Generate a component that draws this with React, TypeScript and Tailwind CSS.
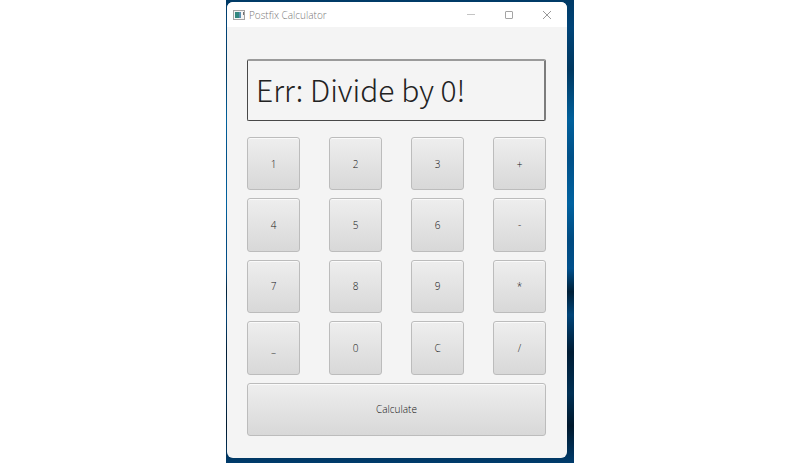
import { useState } from "react";

const keys = ["1", "2", "3", "+", "4", "5", "6", "-", "7", "8", "9", "*", "_", "0", "C", "/"];

const keyStyle =
  "flex items-center justify-center rounded-[3px] border border-[#bcbcbc] bg-linear-to-b from-[#eeeeee] to-[#d8d8d8] text-[10px] leading-4 font-light text-[#111111] shadow-[inset_0_1px_0_#fafafa]";

function TitleBar() {
  return (
    <header className="flex h-[25px] shrink-0 items-center bg-white pl-[6px] pr-[14px]">
      <svg className="h-[10px] w-3 shrink-0" viewBox="0 0 12 10" aria-hidden="true">
        <rect x="0.5" y="0.5" width="11" height="9" fill="#f4f4f4" stroke="#a4a4a4" />
        <rect x="2" y="2" width="4" height="6" fill="#33877f" />
        <rect x="6" y="2" width="2" height="6" fill="#5a8fb0" />
        <rect x="10" y="2" width="1" height="3" fill="#707070" />
      </svg>
      <h1 className="ml-1 flex-1 text-[10px] leading-4 font-light text-[#777777]">Postfix Calculator</h1>
      <div className="flex gap-[26px]">
        <button type="button" aria-label="Minimize" className="h-3 w-3">
          <svg viewBox="0 0 12 12" className="h-3 w-3" fill="none" stroke="#c4c4c4">
            <path d="M2 5.5H10" />
          </svg>
        </button>
        <button type="button" aria-label="Maximize" className="h-3 w-3">
          <svg viewBox="0 0 12 12" className="h-3 w-3" fill="none" stroke="#a4a4a4">
            <rect x="2.5" y="2.5" width="7" height="7" rx="0.5" />
          </svg>
        </button>
        <button type="button" aria-label="Close" className="h-3 w-3">
          <svg viewBox="0 0 12 12" className="h-3 w-3" fill="none" stroke="#999999">
            <path d="M2 2L10 10M10 2L2 10" />
          </svg>
        </button>
      </div>
    </header>
  );
}

export default function App() {
  const [display, setDisplay] = useState("Err: Divide by 0!");

  return (
    <div className="flex h-screen justify-center bg-white font-['Open_Sans','Noto_Sans',sans-serif]">
      <div className="flex w-[348px] bg-[linear-gradient(180deg,#003a66_0%,#004478_6%,#003860_15%,#00609c_26%,#005088_34%,#0062a0_44%,#004a80_52%,#00508c_58%,#002038_63%,#004478_68%,#001c34_76%,#003054_85%,#00182c_92%,#003c6c_100%)] pt-[2px] pr-[7px] pb-[5px] pl-px">
        <main className="flex flex-1 flex-col overflow-hidden rounded-[6px] bg-[#f4f4f4]">
          <TitleBar />
          <div className="flex flex-1 flex-col gap-4 pt-8 pr-[21px] pb-[22px] pl-5">
            <input
              type="text"
              aria-label="Result"
              value={display}
              onChange={(event) => setDisplay(event.target.value)}
              className="h-[62px] w-full shrink-0 rounded-[2px] border border-t-2 border-r-2 border-[#484848] border-t-[#9a9a9a] border-r-[#7c7c7c] bg-[#f4f4f4] px-2 pb-1 font-['Noto_Sans_CJK_JP',sans-serif] text-[30px] font-light text-[#222222] outline-none"
            />
            <div className="grid flex-1 grid-cols-[repeat(4,53px)] grid-rows-5 justify-between gap-y-2">
              {keys.map((key) => (
                <button key={key} type="button" className={keyStyle}>
                  {key}
                </button>
              ))}
              <button type="button" className={`${keyStyle} col-span-4`}>
                Calculate
              </button>
            </div>
          </div>
        </main>
      </div>
    </div>
  );
}
